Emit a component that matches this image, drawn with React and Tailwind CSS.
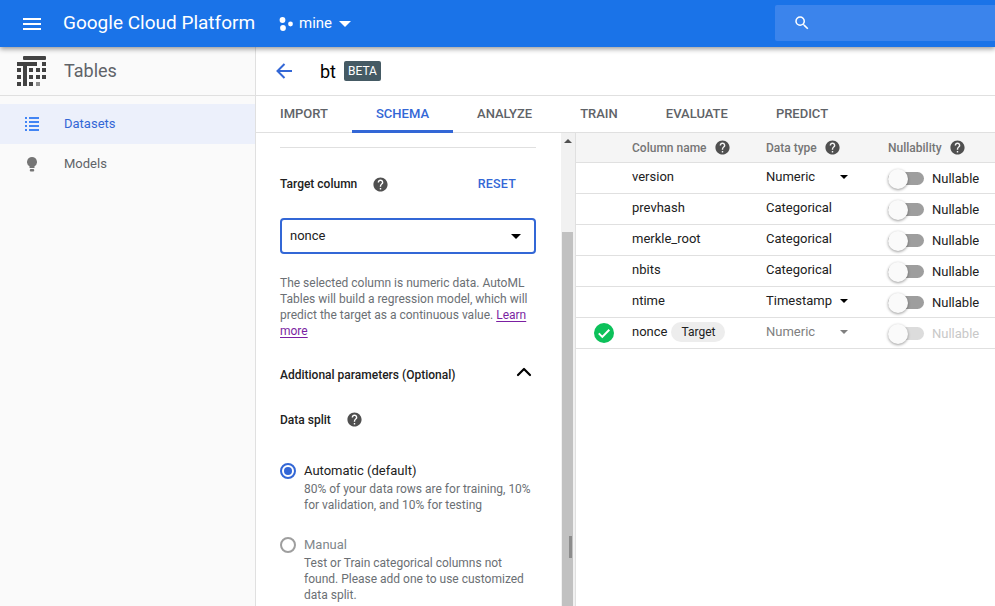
import React from "react";
import { ChevronUp } from "lucide-react";

const font = { fontFamily: "Roboto, sans-serif" };

function Help({ className = "" }) {
  return (
    <svg viewBox="0 0 24 24" className={"w-[17px] h-[17px] " + className} fill="#505050">
      <path d="M12 2C6.48 2 2 6.48 2 12s4.48 10 10 10 10-4.48 10-10S17.52 2 12 2zm1 17h-2v-2h2v2zm2.07-7.75l-.9.92C13.45 12.9 13 13.5 13 15h-2v-.5c0-1.1.45-2.1 1.17-2.83l1.24-1.26c.37-.36.59-.86.59-1.41 0-1.1-.9-2-2-2s-2 .9-2 2H8c0-2.21 1.79-4 4-4s4 1.79 4 4c0 .88-.36 1.68-.93 2.25z" />
    </svg>
  );
}

function Caret({ color = "#000", size = "w-[10px] h-[5px]" }) {
  return (
    <svg viewBox="0 0 10 5" className={size} fill={color}>
      <path d="M0 0l5 5 5-5z" />
    </svg>
  );
}

function Toggle({ disabled }) {
  return (
    <div className="relative w-9 h-[13px] mt-[1px]">
      <div className={"w-[36px] h-[13px] rounded-full " + (disabled ? "bg-[#dcdcdc]" : "bg-[#9e9e9e]")}></div>
      <div className="absolute left-0 top-[-3px] w-5 h-5 rounded-full bg-[#fafafa] shadow-[0_1px_3px_rgba(0,0,0,0.4)]"></div>
    </div>
  );
}

const rows = [
  { name: "version", type: "Numeric", caret: true },
  { name: "prevhash", type: "Categorical" },
  { name: "merkle_root", type: "Categorical" },
  { name: "nbits", type: "Categorical" },
  { name: "ntime", type: "Timestamp", caret: true },
  { name: "nonce", type: "Numeric", caret: true, target: true },
];

const tabs = ["IMPORT", "SCHEMA", "ANALYZE", "TRAIN", "EVALUATE", "PREDICT"];

function Row({ row }) {
  return (
    <div className="flex items-center h-[31px] border-b border-[#e0e0e0] text-[13px] text-[#212121]">
      <div className="w-[56px] flex justify-center">
        {row.target && (
          <svg viewBox="0 0 20 20" className="w-5 h-5">
            <circle cx="10" cy="10" r="10" fill="#0cc15a" />
            <path d="M4.8 10.4l3.5 3.5 7-7.2" fill="none" stroke="#fff" strokeWidth="2" />
          </svg>
        )}
      </div>
      <div className="w-[134px] flex items-center -mt-[2px]">
        <span>{row.name}</span>
        {row.target && (
          <span className="ml-1 h-5 w-[54px] rounded-full bg-[#ededed] flex items-center justify-center text-[12px]">Target</span>
        )}
      </div>
      <div className={"w-[122px] flex items-center -mt-[2px] " + (row.target ? "text-[#808080]" : "")}>
        <span className="w-[73px] whitespace-nowrap">{row.type}</span>
        {row.caret && <Caret color={row.target ? "#808080" : "#000"} size="w-2 h-1 ml-[1px]" />}
      </div>
      <Toggle disabled={row.target} />
      <span className={"ml-2 mt-[1px] " + (row.target ? "text-[#c8c8c8]" : "")}>Nullable</span>
    </div>
  );
}

export default function App() {
  return (
    <div style={font} className="w-[995px] h-[606px] overflow-hidden flex flex-col bg-white">
      <header className="relative z-10 h-[47px] shrink-0 bg-[#1a73e8] flex items-center text-white shadow-[0_2px_5px_rgba(0,0,0,0.4)]">
        <svg viewBox="0 0 18 12" className="ml-[23px] w-[18px] h-3" fill="#fff">
          <rect x="0" y="0" width="18" height="2" />
          <rect x="0" y="5" width="18" height="2" />
          <rect x="0" y="10" width="18" height="2" />
        </svg>
        <span className="ml-[22px] w-[193px] whitespace-nowrap text-[19px]">Google Cloud Platform</span>
        <svg viewBox="0 0 14 14" className="ml-[23px] w-[14px] h-[14px]" fill="#fff">
          <circle cx="3.5" cy="3" r="2.9" />
          <circle cx="11.5" cy="7" r="2.4" />
          <circle cx="4" cy="11" r="2.9" />
        </svg>
        <span className="ml-[6px] text-[15px]">mine</span>
        <Caret color="#fff" size="ml-[7px] w-3 h-[6px]" />
        <div className="ml-[auto] w-[220px] h-[36px] rounded-l-[2px] bg-[#3b84ec] flex items-center pl-[18px] -mt-[1px]">
          <svg viewBox="0 0 24 24" className="w-[18px] h-[18px]" fill="#fff">
            <path d="M15.5 14h-.79l-.28-.27A6.471 6.471 0 0 0 16 9.5 6.5 6.5 0 1 0 9.5 16c1.61 0 3.09-.59 4.23-1.57l.27.28v.79l5 4.99L20.49 19l-4.99-5zm-6 0C7.01 14 5 11.99 5 9.5S7.01 5 9.5 5 14 7.01 14 9.5 11.99 14 9.5 14z" />
          </svg>
        </div>
      </header>

      <div className="flex flex-1 min-h-0">
        <aside className="w-[256px] shrink-0 bg-[#fafafa] border-r border-[#e0e0e0]">
          <div className="h-[49px] flex items-center border-b border-[#e0e0e0] pl-[17px]">
            <svg viewBox="0 0 30 31" className="w-[30px] h-[31px]" fill="#424242">
              <rect x="6" y="0" width="23" height="4" rx="1" />
              <rect x="0" y="6" width="20" height="4" />
              <rect x="25" y="6" width="4" height="4" />
              <rect x="6" y="6" width="4" height="24" />
              <rect x="0" y="12" width="4" height="4" />
              <rect x="12" y="12" width="4" height="4" />
              <rect x="19" y="12" width="4" height="4" />
              <rect x="25" y="12" width="4" height="4" />
              <rect x="0" y="19" width="4" height="4" />
              <rect x="12" y="19" width="4" height="4" />
              <rect x="19" y="19" width="4" height="4" />
              <rect x="25" y="19" width="4" height="4" />
              <rect x="0" y="26" width="4" height="4" />
              <rect x="12" y="26" width="4" height="4" />
              <rect x="19" y="26" width="4" height="4" fillOpacity="0.6" />
            </svg>
            <span className="ml-[17px] pb-[2px] text-[18px] text-[#5f6368]">Tables</span>
          </div>
          <div className="mt-2 h-10 bg-[#ecf0fb] flex items-center text-[13px] text-[#3367d6]">
            <svg viewBox="0 0 14 14" className="ml-[25px] w-[14px] h-[14px]" fill="#4285f4">
              <rect x="0" y="0" width="2" height="2" />
              <rect x="4" y="0" width="10" height="2" />
              <rect x="0" y="4" width="2" height="2" />
              <rect x="4" y="4" width="10" height="2" />
              <rect x="0" y="8" width="2" height="2" />
              <rect x="4" y="8" width="10" height="2" />
              <rect x="0" y="12" width="2" height="2" />
              <rect x="4" y="12" width="10" height="2" />
            </svg>
            <span className="ml-[25px]">Datasets</span>
          </div>
          <div className="h-10 flex items-center text-[13px] text-[#5f6368]">
            <svg viewBox="0 0 10 15" className="ml-[27px] w-[10px] h-[15px]" fill="#757575">
              <path d="M5 0a5 5 0 0 0-2.5 9.3V11h5V9.3A5 5 0 0 0 5 0z" />
              <rect x="2.8" y="12" width="4.4" height="2.5" rx="1" />
            </svg>
            <span className="ml-[27px]">Models</span>
          </div>
        </aside>

        <main className="flex-1 min-w-0 flex flex-col">
          <div className="h-[49px] shrink-0 flex items-center border-b border-[#e0e0e0] pl-[20px]">
            <svg viewBox="0 0 16 16" className="w-4 h-4" fill="none" stroke="#3367d6" strokeWidth="2">
              <path d="M16 8H1.5M8.5 1L1.5 8l7 7" />
            </svg>
            <span className="ml-[28px] text-[18px] text-black">bt</span>
            <span className="ml-2 h-5 px-1 rounded-[2px] bg-[#455a64] flex items-center text-[12px] text-white">BETA</span>
          </div>
          <nav className="h-[37px] shrink-0 flex border-b border-[#e0e0e0] text-[13px] font-medium text-[#5f6368]">
            {tabs.map((t, i) => (
              <div
                key={t}
                className={
                  "flex items-center justify-center -mb-px px-6 border-b-[3px] pt-[1px] " +
                  (i == 1 ? "border-[#3367d6] text-[#3367d6]" : "border-transparent")
                }
              >
                {t}
              </div>
            ))}
          </nav>

          <div className="flex flex-1 min-h-0">
            <section className="w-[305px] shrink-0 overflow-hidden pl-6 pr-[25px] text-[12px] leading-4">
              <div className="mt-[14px] border-t border-[#e0e0e0]"></div>
              <div className="mt-[28px] flex items-center h-4">
                <span className="font-medium text-[#212121]">Target column</span>
                <Help className="ml-[15px]" />
                <span className="ml-auto mr-[20px] text-[12.5px] font-medium text-[#3367d6] tracking-[0.2px]">RESET</span>
              </div>
              <div className="mt-[26px] h-9 border-2 border-[#3367d6] rounded-[4px] flex items-center justify-between pl-2 pr-[13px] text-[13px] text-[#212121]">
                <span>nonce</span>
                <Caret />
              </div>
              <p className="mt-[21px] text-[#6b6f74]">
                The selected column is numeric data. AutoML Tables will build a regression model, which will predict the target as a continuous value.{" "}
                <a className="text-[#7b1fa2] underline underline-offset-2">Learn more</a>
              </p>
              <div className="mt-[28px] flex items-center justify-between h-4">
                <span className="font-medium text-[#212121]">Additional parameters (Optional)</span>
                <ChevronUp className="w-6 h-6 -mt-[6px] text-black" strokeWidth={2.2} />
              </div>
              <div className="mt-[29px] flex items-center h-4">
                <span className="font-medium text-[#212121]">Data split</span>
                <Help className="ml-[15px] -mt-[2px]" />
              </div>
              <div className="mt-[35px] flex">
                <div className="w-4 h-4 rounded-full border-2 border-[#3367d6] flex items-center justify-center shrink-0">
                  <div className="w-2 h-2 rounded-full bg-[#3367d6]"></div>
                </div>
                <div className="ml-2">
                  <div className="text-[13px] text-[#212121]">Automatic (default)</div>
                  <p className="mt-[2px] text-[#6b6f74]">80% of your data rows are for training, 10% for validation, and 10% for testing</p>
                </div>
              </div>
              <div className="mt-[24px] flex">
                <div className="w-4 h-4 rounded-full border-2 border-[#9e9e9e] shrink-0"></div>
                <div className="ml-2">
                  <div className="text-[13px] text-[#80868b]">Manual</div>
                  <p className="mt-[2px] text-[#6b6f74]">Test or Train categorical columns not found. Please add one to use customized data split.</p>
                </div>
              </div>
            </section>

            <div className="relative w-[15px] shrink-0 bg-[#f1f1f1] border-r border-[#e0e0e0]">
              <div className="flex justify-center pt-[6px]">
                <svg viewBox="0 0 8 4" className="w-2 h-1" fill="#505050"><path d="M0 4l4-4 4 4z" /></svg>
              </div>
              <div className="absolute left-[1px] top-[99px] w-[11px] bottom-0 bg-[#c1c1c1]"></div>
              <div className="absolute left-[8px] top-[403px] w-[3px] h-[22px] bg-[#8c8c8c]"></div>
            </div>

            <section className="flex-1 min-w-0 overflow-hidden">
              <div className="h-[30px] bg-[#f5f5f5] border-b border-[#e0e0e0] flex items-center text-[12px] font-medium text-[#757575]">
                <div className="w-[56px]"></div>
                <div className="w-[134px] flex items-center">Column name<Help className="ml-[7px]" /></div>
                <div className="w-[122px] flex items-center">Data type<Help className="ml-[7px]" /></div>
                <div className="flex items-center">Nullability<Help className="ml-[7px]" /></div>
              </div>
              {rows.map((r) => (
                <Row key={r.name} row={r} />
              ))}
            </section>
          </div>
        </main>
      </div>
    </div>
  );
}
